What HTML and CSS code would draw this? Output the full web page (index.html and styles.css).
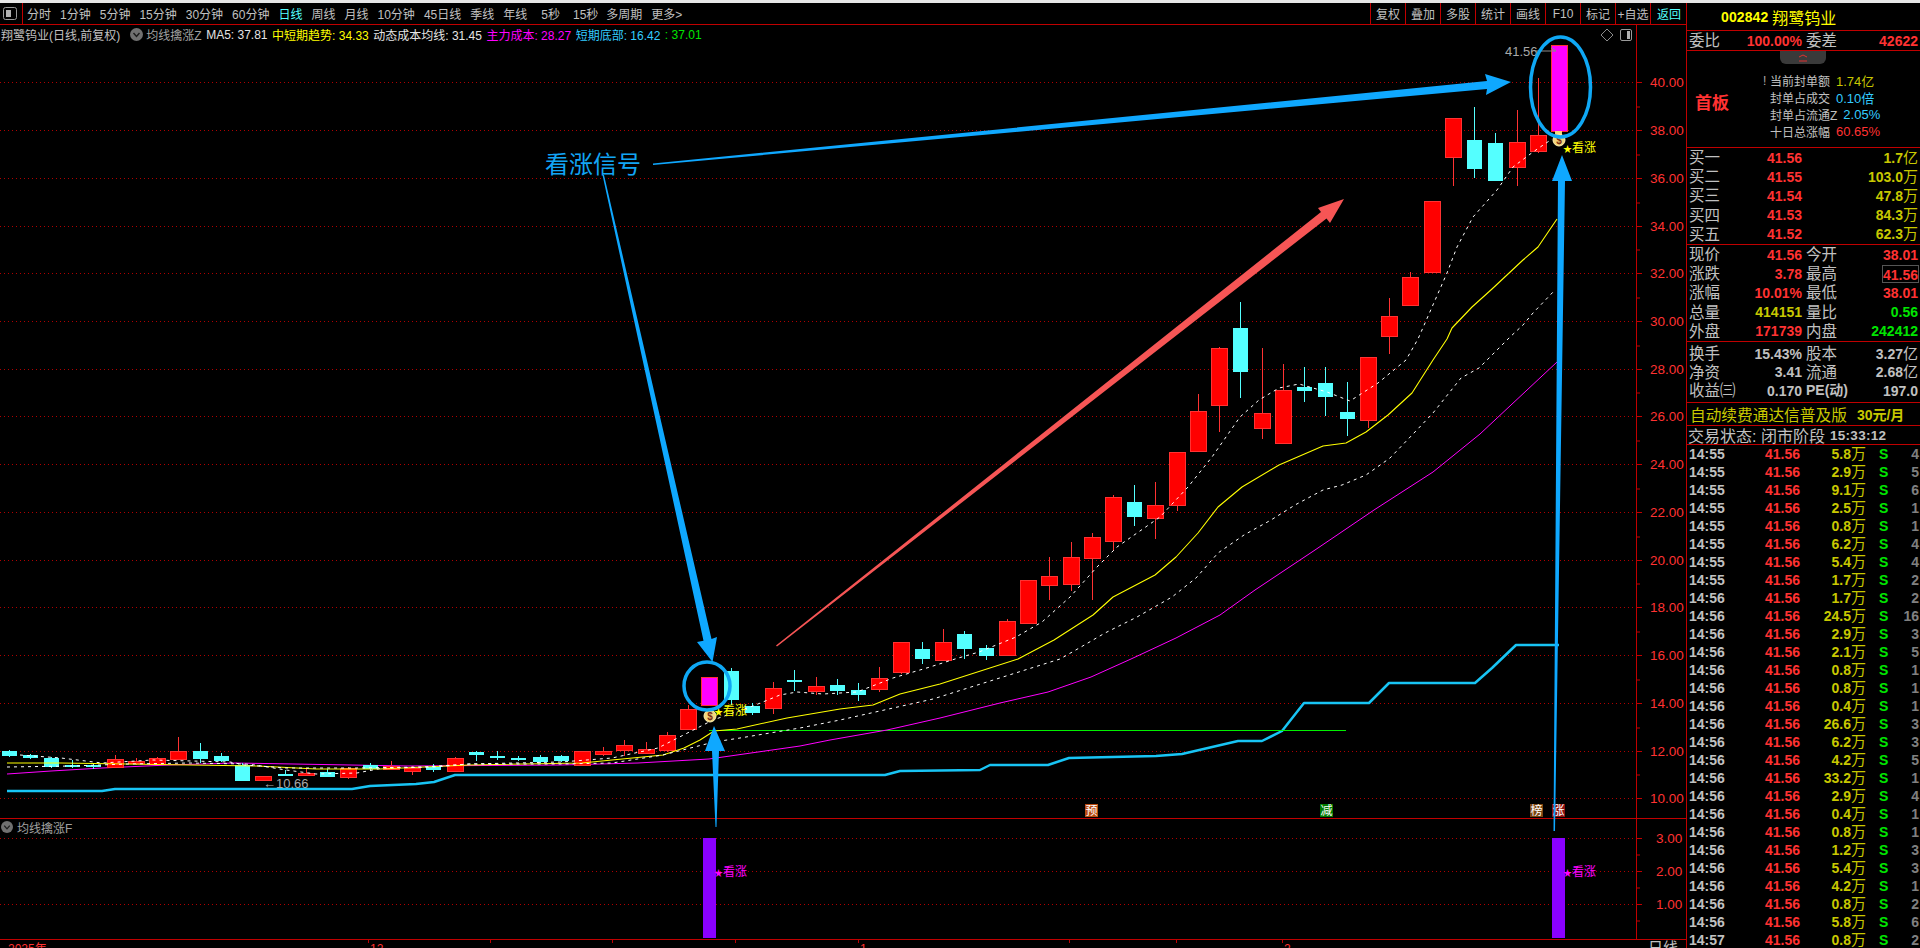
FILE: index.html
```html
<!DOCTYPE html>
<html lang="zh-CN">
<head>
<meta charset="utf-8">
<title>翔鹭钨业 日线</title>
<link rel="stylesheet" href="styles.css">
</head>
<body>
<div class="strip"></div>
<div class="app">
  <section class="left">
    <nav class="toolbar">
      <div class="side-btn"><svg width="14" height="13" viewBox="0 0 14 13"><rect x="0.5" y="0.5" width="13" height="12" rx="2" class="ico-o"/><rect x="3" y="3" width="5" height="7" class="ico-f"/></svg></div>
      <div class="periods">
        <span>分时</span><span>1分钟</span><span>5分钟</span><span>15分钟</span><span>30分钟</span><span>60分钟</span><span class="on">日线</span><span>周线</span><span>月线</span><span>10分钟</span><span>45日线</span><span>季线</span><span>年线</span><span class="pad">5秒</span><span class="pad">15秒</span><span>多周期</span><span>更多&gt;</span>
      </div>
      <div class="btns">
        <span>复权</span><span>叠加</span><span>多股</span><span>统计</span><span>画线</span><span>F10</span><span>标记</span><span>+自选</span><span class="on">返回</span>
      </div>
    </nav>
    <div class="chart">
      <div class="legend">
        <span class="g1">翔鹭钨业(日线,前复权)</span>
        <svg class="dot" width="13" height="13" viewBox="0 0 13 13"><circle cx="6.5" cy="6.5" r="6.5" class="dot-bg"/><path d="M3.5 5l3 3.500 3-3.500" class="dot-v"/></svg>
        <span class="g2">均线擒涨Z</span>
        <span class="w">MA5: 37.81</span>
        <span class="y">中短期趋势: 34.33</span>
        <span class="w">动态成本均线: 31.45</span>
        <span class="m">主力成本: 28.27</span>
        <span class="c">短期底部: 16.42</span>
        <span class="gr">: 37.01</span>
      </div>
      <div class="legend2">
        <svg class="dot" width="12" height="12" viewBox="0 0 13 13"><circle cx="6.500" cy="6.500" r="6.500" class="dot-bg"/><path d="M3.500 5l3 3.500 3-3.500" class="dot-v"/></svg>
        <span class="g2">均线擒涨F</span>
      </div>
      <svg id="chart" class="plot" width="1687" height="923" viewBox="0 25 1687 923">
        <g id="layer"></g>
        <g class="coin"><circle cx="710" cy="716" r="6"/><text x="710" y="720" class="coin-t">$</text></g>
        <g class="coin"><rect x="1555" y="131" width="7" height="4"/><circle cx="1559" cy="140" r="6"/><text x="1559" y="144" class="coin-t">$</text></g>
        <text x="714" y="715" class="sig y-f"><tspan class="star">★</tspan>看涨</text>
        <text x="1563" y="152" class="sig y-f"><tspan class="star">★</tspan>看涨</text>
        <text x="714" y="876" class="sig m-f"><tspan class="star">★</tspan>看涨</text>
        <text x="1563" y="876" class="sig m-f"><tspan class="star">★</tspan>看涨</text>
        <text x="1505" y="56" class="tag">41.56</text>
        <path d="M1535 51h21m-5-3l5 3" class="tag-l"/>
        <text x="263" y="788" class="tag">←10.66</text>
        <path d="M1607 29l6 6-6 6-6-6z" class="tag-l"/>
        <rect x="1620.500" y="29.500" width="11" height="11" rx="1.500" class="ico-o"/>
        <rect x="1627" y="31" width="3" height="8" class="ico-f"/>
        <ellipse cx="707" cy="686" rx="23" ry="24" class="ring"/>
        <ellipse cx="1560.500" cy="87" rx="30" ry="50" class="ring"/>
        <polygon points="653,163.500 1487,81 1485,74 1511,82 1486,95 1487,89 653,165" class="blue"/>
        <polygon points="602.500,175 604,175 711.500,639 717,637 712.500,662 697,642 703.500,640.800" class="blue"/>
        <polygon points="715.500,827 716.500,827 719,751 725,751 714,726 705,751 712,751" class="blue"/>
        <polygon points="1553.500,831 1555,831 1565,181 1572,181 1562,155 1552,181 1558,181" class="blue"/>
        <polygon points="776,645.500 1321,212 1318,208 1344,199 1330,223 1326.500,218.500 777,646.500" class="coral"/>
        <text x="545" y="173" class="note">看涨信号</text>
      </svg>
    </div>
  </section>

  <aside class="panel">
    <div class="title"><b>002842</b> <span>翔鹭钨业</span></div>
    <div class="q one"><span>委比</span><b class="red">100.00%</b><span>委差</span><b class="red">42622</b></div>
    <div class="seal">
      <div class="tab"><svg width="10" height="8" viewBox="0 0 10 8"><path d="M1 3l4-2 4 2M1 7h8" class="caret"/></svg></div>
      <div class="first">首板</div>
      <div class="seal-rows">
        <div><span class="bang">!</span><span>当前封单额</span><em class="ol">1.74亿</em></div>
        <div><span>封单占成交</span><em class="cy">0.10倍</em></div>
        <div><span>封单占流通Z</span><em class="cy">2.05%</em></div>
        <div><span>十日总涨幅</span><em class="red">60.65%</em></div>
      </div>
    </div>
    <div class="block">
      <div class="q"><span>买一</span><b class="red">41.56</b><span></span><b class="ol">1.7<i>亿</i></b></div>
      <div class="q"><span>买二</span><b class="red">41.55</b><span></span><b class="ol">103.0<i>万</i></b></div>
      <div class="q"><span>买三</span><b class="red">41.54</b><span></span><b class="ol">47.8<i>万</i></b></div>
      <div class="q"><span>买四</span><b class="red">41.53</b><span></span><b class="ol">84.3<i>万</i></b></div>
      <div class="q"><span>买五</span><b class="red">41.52</b><span></span><b class="ol">62.3<i>万</i></b></div>
    </div>
    <div class="block">
      <div class="q"><span>现价</span><b class="red">41.56</b><span>今开</span><b class="red">38.01</b></div>
      <div class="q"><span>涨跌</span><b class="red">3.78</b><span>最高</span><b class="red boxed">41.56</b></div>
      <div class="q"><span>涨幅</span><b class="red">10.01%</b><span>最低</span><b class="red">38.01</b></div>
      <div class="q"><span>总量</span><b class="ol">414151</b><span>量比</span><b class="grn">0.56</b></div>
      <div class="q"><span>外盘</span><b class="red">171739</b><span>内盘</span><b class="grn">242412</b></div>
    </div>
    <div class="block fund">
      <div class="q"><span>换手</span><b>15.43%</b><span>股本</span><b>3.27<i>亿</i></b></div>
      <div class="q"><span>净资</span><b>3.41</b><span>流通</span><b>2.68<i>亿</i></b></div>
      <div class="q"><span>收益㈢</span><b>0.170</b><span class="pe">PE(动)</span><b>197.0</b></div>
    </div>
    <div class="ad"><span>自动续费通达信普及版</span><b>30元/月</b></div>
    <div class="state"><span>交易状态: 闭市阶段</span><b>15:33:12</b></div>
    <div class="ticks">
      <div class="t"><b>14:55</b><b class="red">41.56</b><b class="ol">5.8<i>万</i></b><b class="grn">S</b><b class="n">4</b></div>
      <div class="t"><b>14:55</b><b class="red">41.56</b><b class="ol">2.9<i>万</i></b><b class="grn">S</b><b class="n">5</b></div>
      <div class="t"><b>14:55</b><b class="red">41.56</b><b class="ol">9.1<i>万</i></b><b class="grn">S</b><b class="n">6</b></div>
      <div class="t"><b>14:55</b><b class="red">41.56</b><b class="ol">2.5<i>万</i></b><b class="grn">S</b><b class="n">1</b></div>
      <div class="t"><b>14:55</b><b class="red">41.56</b><b class="ol">0.8<i>万</i></b><b class="grn">S</b><b class="n">1</b></div>
      <div class="t"><b>14:55</b><b class="red">41.56</b><b class="ol">6.2<i>万</i></b><b class="grn">S</b><b class="n">4</b></div>
      <div class="t"><b>14:55</b><b class="red">41.56</b><b class="ol">5.4<i>万</i></b><b class="grn">S</b><b class="n">4</b></div>
      <div class="t"><b>14:55</b><b class="red">41.56</b><b class="ol">1.7<i>万</i></b><b class="grn">S</b><b class="n">2</b></div>
      <div class="t"><b>14:56</b><b class="red">41.56</b><b class="ol">1.7<i>万</i></b><b class="grn">S</b><b class="n">2</b></div>
      <div class="t"><b>14:56</b><b class="red">41.56</b><b class="ol">24.5<i>万</i></b><b class="grn">S</b><b class="n">16</b></div>
      <div class="t"><b>14:56</b><b class="red">41.56</b><b class="ol">2.9<i>万</i></b><b class="grn">S</b><b class="n">3</b></div>
      <div class="t"><b>14:56</b><b class="red">41.56</b><b class="ol">2.1<i>万</i></b><b class="grn">S</b><b class="n">5</b></div>
      <div class="t"><b>14:56</b><b class="red">41.56</b><b class="ol">0.8<i>万</i></b><b class="grn">S</b><b class="n">1</b></div>
      <div class="t"><b>14:56</b><b class="red">41.56</b><b class="ol">0.8<i>万</i></b><b class="grn">S</b><b class="n">1</b></div>
      <div class="t"><b>14:56</b><b class="red">41.56</b><b class="ol">0.4<i>万</i></b><b class="grn">S</b><b class="n">1</b></div>
      <div class="t"><b>14:56</b><b class="red">41.56</b><b class="ol">26.6<i>万</i></b><b class="grn">S</b><b class="n">3</b></div>
      <div class="t"><b>14:56</b><b class="red">41.56</b><b class="ol">6.2<i>万</i></b><b class="grn">S</b><b class="n">3</b></div>
      <div class="t"><b>14:56</b><b class="red">41.56</b><b class="ol">4.2<i>万</i></b><b class="grn">S</b><b class="n">5</b></div>
      <div class="t"><b>14:56</b><b class="red">41.56</b><b class="ol">33.2<i>万</i></b><b class="grn">S</b><b class="n">1</b></div>
      <div class="t"><b>14:56</b><b class="red">41.56</b><b class="ol">2.9<i>万</i></b><b class="grn">S</b><b class="n">4</b></div>
      <div class="t"><b>14:56</b><b class="red">41.56</b><b class="ol">0.4<i>万</i></b><b class="grn">S</b><b class="n">1</b></div>
      <div class="t"><b>14:56</b><b class="red">41.56</b><b class="ol">0.8<i>万</i></b><b class="grn">S</b><b class="n">1</b></div>
      <div class="t"><b>14:56</b><b class="red">41.56</b><b class="ol">1.2<i>万</i></b><b class="grn">S</b><b class="n">3</b></div>
      <div class="t"><b>14:56</b><b class="red">41.56</b><b class="ol">5.4<i>万</i></b><b class="grn">S</b><b class="n">3</b></div>
      <div class="t"><b>14:56</b><b class="red">41.56</b><b class="ol">4.2<i>万</i></b><b class="grn">S</b><b class="n">1</b></div>
      <div class="t"><b>14:56</b><b class="red">41.56</b><b class="ol">0.8<i>万</i></b><b class="grn">S</b><b class="n">2</b></div>
      <div class="t"><b>14:56</b><b class="red">41.56</b><b class="ol">5.8<i>万</i></b><b class="grn">S</b><b class="n">6</b></div>
      <div class="t"><b>14:57</b><b class="red">41.56</b><b class="ol">0.8<i>万</i></b><b class="grn">S</b><b class="n">2</b></div>
    </div>
  </aside>
</div>
<script src="chart.js"></script>
</body>
</html>
```
FILE: styles.css
```css
* { box-sizing: border-box; }
html, body { margin: 0; height: 100%; background: #000; overflow: hidden; }
body { font: 12px "Liberation Sans", "Noto Sans CJK SC", sans-serif; color: #c0c0c0; }
.strip { height: 3px; background: #e6e6e6; }
.app { display: flex; height: 945px; }
.left { width: 1687px; flex: none; display: flex; flex-direction: column; }
.toolbar { height: 22px; flex: none; display: flex; align-items: stretch; border-bottom: 1px solid #c00000; }
.side-btn { width: 23px; display: flex; align-items: center; padding-left: 3px; border-right: 1px solid #c00000; }
.ico-o { fill: none; stroke: #9a9a9a; stroke-width: 1; }
.ico-f { fill: #b0b0b0; }
.periods { display: flex; align-items: center; gap: 9px; padding-left: 4px; white-space: nowrap; }
.periods .pad { margin-left: 5px; margin-right: -1px; }
.on { color: #54ffff; }
.btns { margin-left: auto; display: flex; }
.btns span { width: 35px; border-left: 1px solid #c00000; display: flex; align-items: center; justify-content: center; white-space: nowrap; font-size: 12px; }
.btns span:last-child { width: 37px; }
.chart { position: relative; flex: 1; overflow: hidden; }
.plot { display: block; }
.legend { position: absolute; top: 0; left: 1px; height: 19px; display: flex; align-items: center; gap: 4.500px; white-space: nowrap; }
.legend2 { position: absolute; top: 793px; left: 1px; display: flex; align-items: center; gap: 5px; height: 18px; }
.dot { flex: none; margin-left: 5px; }
.legend2 .dot { margin-left: 0; }
.dot-bg { fill: #707070; }
.dot-v { fill: none; stroke: #1c1c1c; stroke-width: 1.400; }
.g1 { color: #c0c0c0; }
.g2 { color: #a0a0a0; margin-left: -1px; }
.w { color: #e4e4e4; }
.y { color: #ffff00; }
.m { color: #ff00ff; }
.c { color: #33ccff; }
.gr { color: #00e600; margin-left: 0; }

#layer .grid { stroke: #b00000; stroke-width: 1; stroke-dasharray: 1 3; }
#layer .axis { stroke: #c00000; stroke-width: 1; }
#layer .px { fill: #ff3232; font-size: 13.500px; letter-spacing: 0; }
#layer .date { fill: #ff3232; font-size: 12px; }
#layer .dgray { fill: #c0c0c0; font-size: 15px; }
.rc { fill: #ff0000; stroke: #ff3232; stroke-width: 1; shape-rendering: crispEdges; }
.cc { fill: #54ffff; shape-rendering: crispEdges; }
.mc { fill: #ff00ff; stroke: #ff3232; stroke-width: 1.500; shape-rendering: crispEdges; }
.rw { stroke: #ff3232; stroke-width: 1; shape-rendering: crispEdges; }
.cw { stroke: #54ffff; stroke-width: 1; shape-rendering: crispEdges; }
.vbar { fill: #8a00ff; }
.l { fill: none; stroke-linejoin: round; }
.l-y { stroke: #ffff00; stroke-width: 1.100; }
.l-d { stroke: #ffffff; stroke-width: 1; stroke-dasharray: 3 4; }
.l-m { stroke: #ff00ff; stroke-width: 1; }
.l-c { stroke: #18c4f4; stroke-width: 2.500; }
.l-g { stroke: #00f000; stroke-width: 1.200; shape-rendering: crispEdges; }
.b1 { fill: #b84a10; }
.b2 { fill: #007a00; }
.b3 { fill: #7a4510; }
.b4 { fill: #8a1010; }
.badge-t { fill: #fff; font-size: 12px; text-anchor: middle; }
.coin circle { fill: #f4d67c; stroke: #fff0b0; stroke-width: 1; }
.coin rect { fill: #f4d67c; }
.coin-t { fill: #7a2a10; font: bold 10px "Liberation Sans", sans-serif; text-anchor: middle; }
.sig { font-size: 12px; }
.star { font-size: 9px; }
.y-f { fill: #ffff00; }
.m-f { fill: #ff00ff; }
.tag { fill: #a8a8a8; font-size: 13px; }
.tag-l { fill: none; stroke: #8a8a8a; stroke-width: 1; }
.ring { fill: none; stroke: #0fa8f5; stroke-width: 3.500; }
.blue { fill: #0fa8ff; }
.coral { fill: #f65555; }
.note { fill: #12a5f5; font-size: 24px; }

.panel { flex: none; border-left: 1px solid #c00000; overflow: hidden; margin-left: -1px; width: 234px; }
.title { height: 28px; border-bottom: 1px solid #c00000; display: flex; align-items: center; justify-content: flex-start; gap: 4px; color: #ffff00; padding-left: 34px; }
.title b { font-size: 14px; letter-spacing: .1px; }
.title span { font-size: 16px; }
.q { display: grid; grid-template-columns: 32px 81px 32px 1fr; column-gap: 0; height: 19.200px; align-items: center; padding: 0 2px; white-space: nowrap; }
.q span { font-size: 15.500px; line-height: 19px; }
.q span:nth-child(3) { margin-left: 4px; }
.q b { font-size: 14px; text-align: right; line-height: 18px; }
.q b:nth-child(4) { text-align: right; margin-left: 4px; }
.q i, .t i { font-style: normal; font-weight: 400; font-size: 15px; }
.one { height: 20px; border-bottom: 1px solid #c00000; }
.red { color: #ff3232; }
.ol { color: #c8c800; }
.grn { color: #00e600; }
.cy { color: #33ccff; }
.boxed { justify-self: end; width: 37px; height: 18px; border: 1px solid #555; padding-right: 0; margin-right: -1px; text-align: center; line-height: 16px; }
.seal { position: relative; height: 97px; border-bottom: 1px solid #c00000; display: flex; }
.tab { position: absolute; top: 0; left: 93px; width: 46px; height: 13px; background: #3a3a3a; border-radius: 0 0 6px 6px; display: flex; justify-content: center; align-items: center; }
.caret { fill: none; stroke: #e03030; stroke-width: 1; }
.first { width: 83px; padding-left: 8px; margin-top: 38px; font-size: 17px; font-weight: 700; color: #ff3232; }
.seal-rows { padding-top: 21px; position: relative; }
.seal-rows div { height: 17px; display: flex; align-items: center; gap: 6px; white-space: nowrap; position: relative; }
.seal-rows em { font-style: normal; font-size: 13px; }
.bang { position: absolute; left: -7px; color: #aaa; font-size: 12px; }
.block { height: 97px; border-bottom: 1px solid #c00000; }
.fund { height: 61px; padding-top: 2px; }
.fund .q { height: 18.600px; }
.q .pe { font-size: 14px; font-weight: 700; white-space: nowrap; }
.ad { height: 23px; border-bottom: 1px solid #c00000; color: #c8c800; display: flex; align-items: center; padding-left: 3px; gap: 10px; white-space: nowrap; }
.ad span { font-size: 15.700px; }
.ad b { font-size: 14px; }
.state { height: 19px; border-bottom: 1px solid #c00000; display: flex; align-items: center; padding-left: 1px; gap: 5px; white-space: nowrap; }
.state span { font-size: 16px; }
.state b { font-size: 13.500px; letter-spacing: .3px; }
.t { display: grid; grid-template-columns: 40px 71px 66px 34px 1fr; height: 18px; align-items: center; padding: 0 1px 0 2px; font-size: 14px; line-height: 18px; white-space: nowrap; }
.t b:nth-child(2), .t b:nth-child(3), .t b:nth-child(5) { text-align: right; }
.t b:nth-child(4) { padding-left: 13px; }
.n { color: #808080; }
```
FILE: chart.js
```js
// Candles: body top, body bottom, wick top, wick bottom (screen y), kind
const bars = [
[751,756,750,757,'c'],[755,758,754,759,'c'],[758,767,757,768,'c'],[765,766,760,768,'c'],[765,766,763,769,'c'],
[759,767,755,767,'r'],[761,763,758,765,'r'],[758,764,757,764,'r'],[751,759,737,760,'r'],[751,759,743,763,'c'],
[756,761,753,762,'c'],[765,781,763,781,'c'],[776,780,776,780,'r'],[774,775,770,776,'c'],[773,775,768,775,'r'],
[772,777,769,777,'c'],[768,777,767,779,'r'],[765,769,763,770,'c'],[766,769,761,769,'r'],[768,771,766,775,'r'],
[767,770,764,772,'c'],[758,771,757,772,'r'],[752,755,751,761,'c'],[756,758,751,760,'c'],[758,760,756,761,'c'],
[757,762,755,763,'c'],[756,761,755,762,'c'],[751,765,751,765,'r'],[751,754,747,756,'r'],[745,750,740,756,'r'],
[749,753,742,753,'r'],[735,750,732,752,'r'],[709,729,705,730,'r'],[677,705,677,705,'m'],[671,700,668,705,'c'],
[706,713,703,715,'c'],[688,708,682,714,'r'],[680,682,670,691,'c'],[686,691,677,695,'r'],[685,691,679,695,'c'],
[690,695,683,701,'c'],[678,689,667,692,'r'],[642,672,642,674,'r'],[649,659,642,664,'c'],[642,660,629,660,'r'],
[634,649,631,659,'c'],[648,656,645,660,'c'],[621,655,619,655,'r'],[580,623,580,623,'r'],[576,585,557,600,'r'],
[557,584,542,591,'r'],[537,558,533,600,'r'],[497,541,495,551,'r'],[502,517,485,526,'c'],[505,518,482,539,'r'],
[452,505,452,511,'r'],[411,451,394,451,'r'],[348,405,347,432,'r'],[328,372,302,398,'c'],[413,428,348,439,'r'],
[390,443,364,443,'r'],[387,391,367,402,'c'],[383,397,367,416,'c'],[412,419,382,436,'c'],[357,420,357,428,'r'],
[316,336,298,354,'r'],[277,305,272,305,'r'],[201,272,201,272,'r'],[118,157,118,186,'r'],[140,169,107,178,'c'],
[143,181,133,181,'c'],[142,167,110,186,'r'],[135,151,78,153,'r'],[45,131,45,131,'m']
];

const yellow = "7,763 61,763 258,766 316,769 380,769 469,765 582,763 612,760 663,755 684,748 700,740 714,731 737,729 787,718 840,709 873,705 900,694 940,684 1018,659 1054,640 1093,615 1113,597 1155,575 1176,557 1198,533 1218,507 1242,487 1279,465 1323,446 1346,443 1366,432 1388,415 1412,393 1433,360 1447,339 1452,328 1472,307 1492,289 1523,260 1538,247 1557,219";
const dashLow = "7,767 71,766 128,764 189,763 245,764 255,765 286,770 316,774 357,773 383,768 434,767 469,764 561,764 612,763 663,755 714,742 740,738 800,728 840,720 933,699 1060,659 1081,647 1105,633 1137,617 1172,597 1196,578 1218,553 1244,535 1271,520 1295,505 1323,490 1342,485 1366,475 1390,458 1414,433 1433,413 1461,378 1479,368 1510,337 1523,325 1533,313 1555,290";
const dashHigh = "20,755 61,758 102,763 153,760 230,762 245,765 286,768 357,768 423,767 469,764 561,762 612,758 658,748 713,720 753,706 780,695 797,692 823,694 857,692 893,678 930,667 955,659 979,652 1016,637 1042,622 1070,597 1097,567 1117,547 1160,517 1188,487 1212,457 1240,417 1259,400 1279,388 1299,384 1327,392 1350,401 1378,383 1406,360 1418,339 1447,273 1457,247 1473,217 1497,190 1513,167 1533,152 1552,139";
const magenta = "7,774 51,771 102,768 168,765 235,763 408,766 561,765 638,763 709,759 800,746 830,740 887,730 940,718 1000,703 1048,692 1091,677 1131,659 1176,638 1220,615 1255,590 1315,550 1374,510 1433,472 1480,434 1557,362";
const cyan = "7,791 102,791 115,789 352,789 370,786 416,784 434,782 455,775 885,775 900,771 980,770 990,765 1048,765 1069,758 1156,756 1182,754 1238,741 1262,741 1282,731 1304,703 1369,703 1389,683 1475,683 1492,668 1516,645 1559,645";

const priceY = p => 82.3 + (40 - p) * 23.87;
let s = '';

// price grid and labels
for (let p = 10; p <= 40; p += 2) {
  const y = Math.round(priceY(p)) + 0.5;
  s += `<line x1="0" x2="1636" y1="${y}" y2="${y}" class="grid"/>`;
  s += `<line x1="1636" x2="1642" y1="${y}" y2="${y}" class="axis"/>`;
  if (p < 40) s += `<line x1="1636" x2="1640" y1="${y - 23.5}" y2="${y - 23.5}" class="axis"/>`;
  s += `<text x="1650" y="${y + 4}" class="px">${p}.00</text>`;
}
// lower panel grid
[[3, 838], [2, 871], [1, 904]].forEach(([v, y]) => {
  s += `<line x1="0" x2="1636" y1="${y + .5}" y2="${y + .5}" class="grid"/>`;
  s += `<line x1="1636" x2="1642" y1="${y + .5}" y2="${y + .5}" class="axis"/>`;
  s += `<line x1="1636" x2="1640" y1="${y + 17}" y2="${y + 17}" class="axis"/>`;
  s += `<text x="1656" y="${y + 4.5}" class="px">${v}.00</text>`;
});
// frame
s += `<line x1="1636.500" x2="1636.500" y1="25" y2="939" class="axis"/>`;
s += `<line x1="0" x2="1687" y1="818.500" y2="818.500" class="axis"/>`;
s += `<line x1="0" x2="1687" y1="939.500" y2="939.500" class="axis"/>`;
[368, 490, 612, 735, 858, 1069, 1176, 1282].forEach(x => {
  s += `<line x1="${x + .5}" x2="${x + .5}" y1="939" y2="943" class="axis"/>`;
});
s += `<text x="8" y="953" class="date">2025年</text><text x="370" y="953" class="date">12</text><text x="860" y="953" class="date">1</text><text x="1284" y="953" class="date">2</text><text x="1648" y="953" class="dgray">日线</text>`;

// step and average lines under the candles
s += `<polyline points="${cyan}" class="l l-c"/>`;
s += `<line x1="709" x2="1346" y1="730.500" y2="730.500" class="l-g"/>`;
s += `<polyline points="${magenta}" class="l l-m"/>`;

// candles
bars.forEach(([t, b, wt, wb, k], i) => {
  const x = Math.round(8.5 + 21.24 * i);
  if (k !== 'm') s += `<line x1="${x + .5}" x2="${x + .5}" y1="${wt}" y2="${wb}" class="${k}w"/>`;
  if (k === 'c') s += `<rect x="${x - 7}" y="${t}" width="15" height="${Math.max(b - t, 2)}" class="cc"/>`;
  else s += `<rect x="${x - 7.5}" y="${t + .5}" width="16" height="${Math.max(b - t, 1)}" class="${k}c"/>`;
});

s += `<polyline points="${yellow}" class="l l-y"/>`;
s += `<polyline points="${dashLow}" class="l l-d"/>`;
s += `<polyline points="${dashHigh}" class="l l-d"/>`;

// indicator bars
s += `<rect x="703" y="838" width="13" height="100" class="vbar"/><rect x="1552" y="838" width="13" height="100" class="vbar"/>`;

// event badges
[[1085, '预', 'b1'], [1320, '减', 'b2'], [1530, '榜', 'b3'], [1552, '涨', 'b4']].forEach(([x, t, c]) => {
  s += `<rect x="${x}" y="804" width="13" height="13" class="${c}"/><text x="${x + 6.5}" y="815" class="badge-t">${t}</text>`;
});

document.getElementById('layer').innerHTML = s;
```
